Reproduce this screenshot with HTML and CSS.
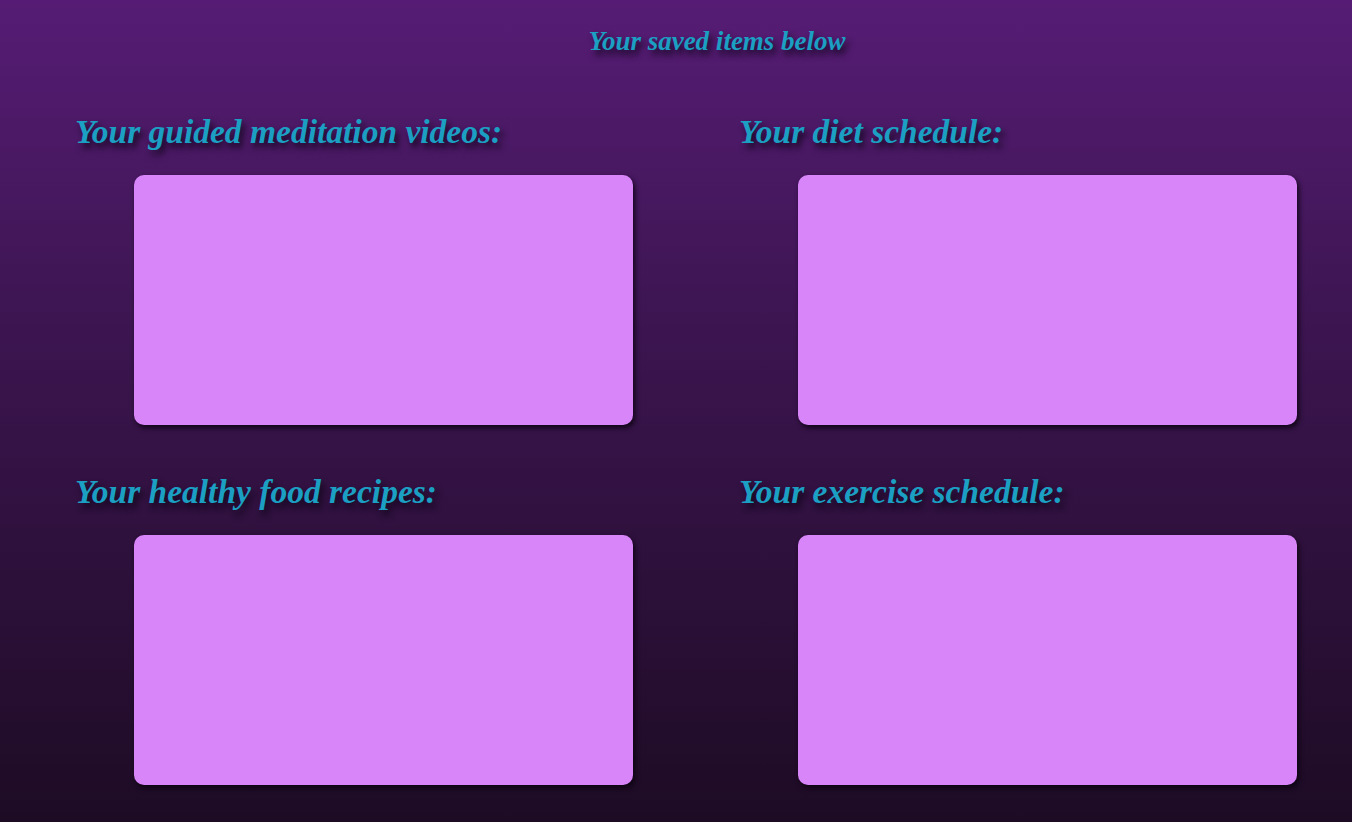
FILE: index.html
```html
<!DOCTYPE html>
<html>
<head>
<meta charset="utf-8">
<link rel="stylesheet" href="styles.css">
</head>
<body>
<div class="page">
  <h1 class="title">Your saved items below</h1>
  <div class="grid">
    <section class="item">
      <h2 class="heading">Your guided meditation videos:</h2>
      <div class="card"></div>
    </section>
    <section class="item">
      <h2 class="heading">Your diet schedule:</h2>
      <div class="card"></div>
    </section>
    <section class="item">
      <h2 class="heading">Your healthy food recipes:</h2>
      <div class="card"></div>
    </section>
    <section class="item">
      <h2 class="heading">Your exercise schedule:</h2>
      <div class="card"></div>
    </section>
  </div>
</div>
</body>
</html>
```
FILE: styles.css
```css
html, body {
  margin: 0;
  padding: 0;
}
body {
  min-height: 822px;
  background: linear-gradient(to bottom, #561c75 0%, #3c1550 40%, #1d0b24 100%);
  font-family: "Liberation Serif", "Times New Roman", serif;
  overflow: hidden;
}
.page {
  height: 822px;
}
.title {
  margin: 0;
  padding: 23px 0 0 82px;
  text-align: center;
  font-size: 27px;
  line-height: 36px;
  font-style: italic;
  font-weight: bold;
  color: #1b9fc2;
  text-shadow: 3px 5px 6px rgba(15, 5, 25, 0.9);
}
.grid {
  display: grid;
  grid-template-columns: 664px 1fr;
  padding: 53px 0 0 75px;
  row-gap: 47px;
}
.item {
  display: flex;
  flex-direction: column;
}
.heading {
  margin: 0;
  font-size: 33.5px;
  line-height: 40px;
  font-style: italic;
  font-weight: bold;
  color: #1b9fc2;
  text-shadow: 3px 5px 6px rgba(15, 5, 25, 0.9);
}
.card {
  margin: 23px 0 0 59px;
  width: 499px;
  height: 250px;
  border-radius: 10px;
  background: #d985fa;
  box-shadow: 2px 3px 5px rgba(10, 3, 15, 0.85);
}
```
